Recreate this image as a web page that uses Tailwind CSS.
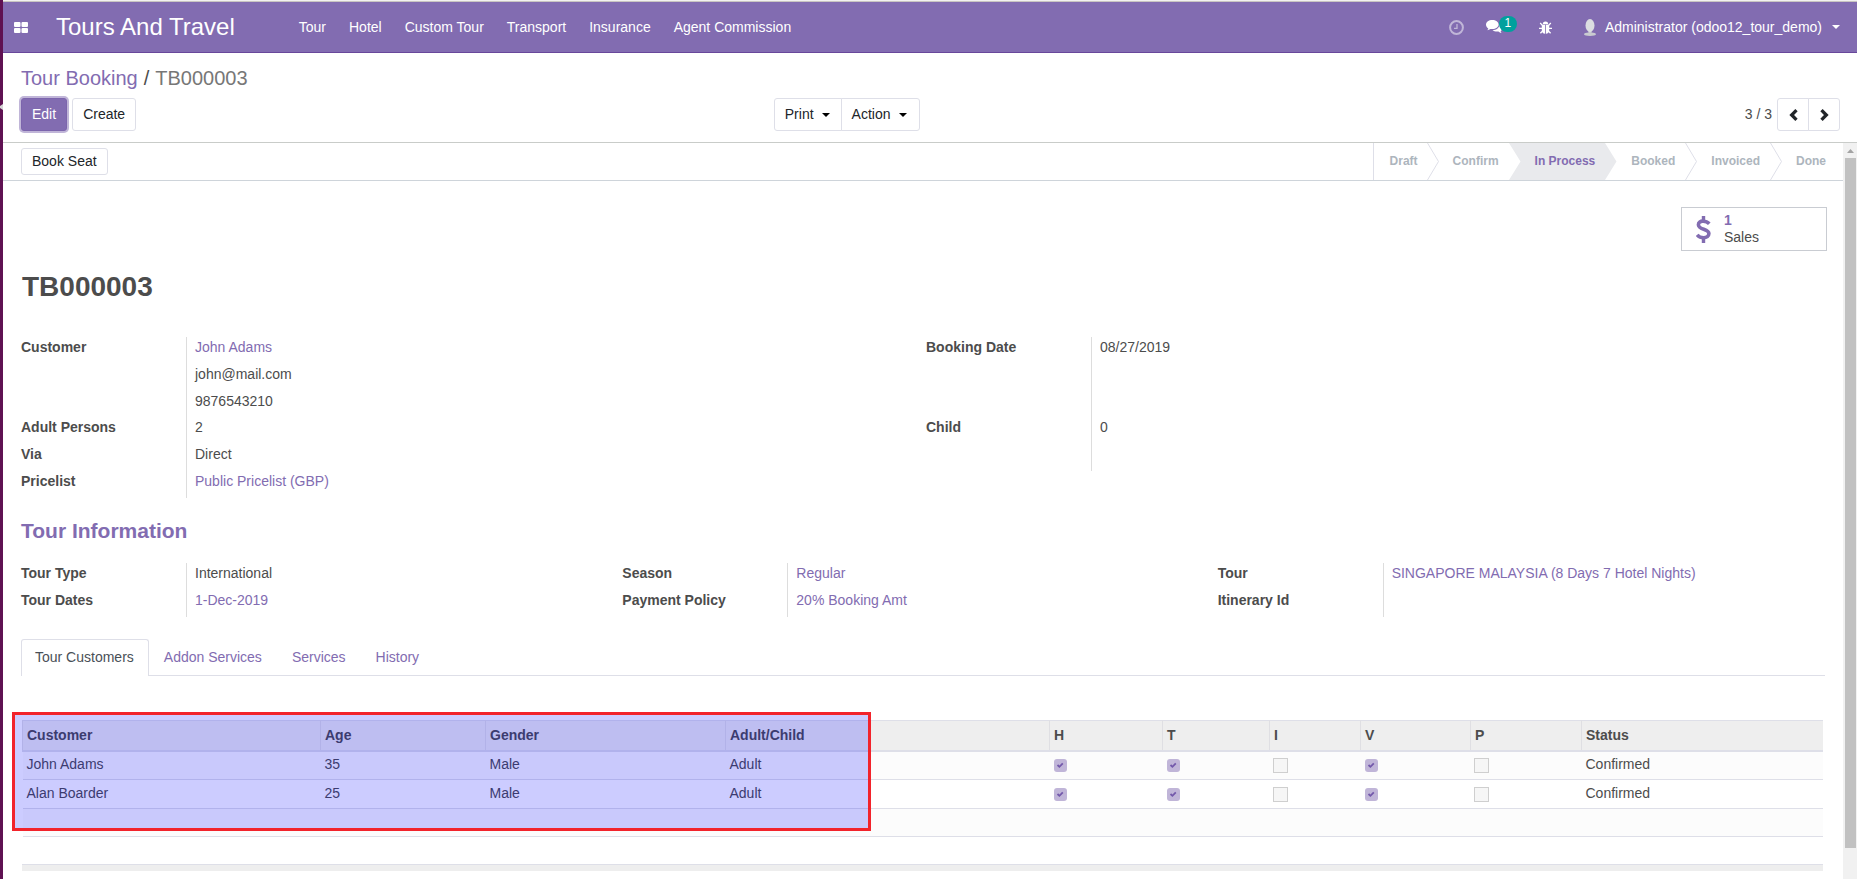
<!doctype html>
<html lang="en">
<head>
  <meta charset="UTF-8">
  <meta name="viewport" content="width=device-width, initial-scale=1.0">
  <title>TB000003 - Tours And Travel</title>
  <script src="https://cdn.jsdelivr.net/npm/@tailwindcss/browser@4"></script>
</head>
<body class="flex h-screen overflow-hidden bg-white font-['Liberation_Sans',Arial,sans-serif] text-sm leading-[21px] text-[#4c4c4c]">

<!-- launcher edge -->
<aside class="flex w-[3px] shrink-0 flex-col bg-[#5f1152] pt-[104px]">
  <svg class="h-[6px] w-[3px]" viewBox="0 0 3 6"><path fill="#d5d5d5" d="M3 0v6L0 4V2z"/></svg>
</aside>

<div class="flex min-w-0 flex-1 flex-col border-t border-[#f2f1f0]">

  <!-- navbar -->
  <header class="flex h-[52px] shrink-0 items-center border-t border-b border-t-[#c9c5c2] border-b-[#68479b] bg-[#826cb1] text-white">
    <button type="button" aria-label="Applications" class="ml-[11px]">
      <svg class="h-[11px] w-[14px]" viewBox="0 0 14 11" fill="#fff"><rect width="6.5" height="5" rx="1"/><rect x="7.5" width="6.5" height="5" rx="1"/><rect y="6" width="6.5" height="5" rx="1"/><rect x="7.5" y="6" width="6.5" height="5" rx="1"/></svg>
    </button>
    <a href="#" class="ml-7 text-2xl">Tours And Travel</a>
    <nav class="ml-16 flex gap-[23px]">
      <a href="#">Tour</a>
      <a href="#">Hotel</a>
      <a href="#">Custom Tour</a>
      <a href="#">Transport</a>
      <a href="#">Insurance</a>
      <a href="#">Agent Commission</a>
    </nav>
    <div class="ml-auto flex items-center pr-[17px]">
      <button type="button" aria-label="Activities" class="mr-[22px]">
        <svg class="size-[15px] opacity-50" viewBox="0 0 15 15" fill="none" stroke="#fff"><circle cx="7.5" cy="7.5" r="6.4" stroke-width="2"/><path d="M8 4v4.300H5" stroke-width="1.300"/></svg>
      </button>
      <button type="button" aria-label="Conversations" class="mr-[22px] flex items-center">
        <svg class="h-[14px] w-4" viewBox="0 0 16 14" fill="#fff"><path d="M6.300 0C2.800 0 0 2.100 0 4.700c0 1.500.9 2.800 2.300 3.700-.2.700-.6 1.200-1.200 1.800 1.300-.1 2.400-.6 3.300-1.300.6.100 1.200.2 1.900.2 3.500 0 6.300-2 6.300-4.500S9.800 0 6.300 0z"/><path d="M13.500 4.200c.2 3.300-3 5.800-7 6 1.100.9 2.800 1.400 4.500 1.400.5 0 1 0 1.400-.1.9.7 2 1.300 3.300 1.400-.5-.5-.9-1.100-1.100-1.700 1-.7 1.400-1.600 1.400-2.800 0-1.700-.9-3.200-2.500-4.200z"/></svg>
        <span class="-ml-[3px] -mt-[6px] h-4 w-[18px] rounded-full bg-[#00a09d] text-center text-xs leading-[14px]">1</span>
      </button>
      <button type="button" aria-label="Debug tools" class="mr-8">
        <svg class="size-[13px]" viewBox="0 0 13 13" fill="#fff"><path d="M3.800 3.200a2.700 2.700 0 0 1 5.400 0z"/><path d="M2.800 3.800h3.300v9C4 12.600 2.800 11.200 2.800 9zM6.900 3.800h3.300V9c0 2.200-1.200 3.600-3.300 3.800z"/><path d="M1.200 2 3.600 4.600M11.800 2 9.400 4.600M0 7.300h3.500M13 7.300H9.500M1.400 12.300l2.400-2.600M11.600 12.300 9.200 9.700" stroke="#fff" stroke-width="1.300"/></svg>
      </button>
      <button type="button" class="flex items-center">
        <svg class="mr-[9px] h-[17px] w-3" viewBox="0 0 12 17"><path fill="#c9cbd0" d="M4.500 12h3v1.500c2.500.2 4.500.8 4.500 1.800 0 1.100-2.700 1.700-6 1.700s-6-.6-6-1.700c0-1 2-1.600 4.500-1.800z"/><ellipse cx="6" cy="6.500" rx="4.500" ry="6.500" fill="#dcdee1"/></svg>
        Administrator (odoo12_tour_demo)
        <svg class="ml-[10px] h-1 w-2" viewBox="0 0 8 4"><path fill="#fff" d="M0 0h8L4 4z"/></svg>
      </button>
    </div>
  </header>

  <!-- breadcrumb, buttons and pager -->
  <section class="shrink-0 border-b border-[#c9ccc9] pb-[11px] pl-[18px] pr-[17px] pt-[10px]">
    <div class="flex gap-[6px] text-xl leading-[30px]">
      <a href="#" class="text-[#826cb1]">Tour Booking</a>
      <span>/</span>
      <span class="text-[#777]">TB000003</span>
    </div>
    <div class="mt-[5px] grid grid-cols-2 items-center">
      <div class="flex justify-between pr-[11px] text-[#212529]">
        <div class="flex gap-[5px]">
          <button type="button" class="h-[33px] rounded-[3px] border border-[#7c65ad] bg-[#826cb1] px-[10px] text-white ring-2 ring-[#826cb1]/50">Edit</button>
          <button type="button" class="h-[33px] rounded-[3px] border border-[#dedfe8] px-[10px]">Create</button>
        </div>
        <div class="flex">
          <button type="button" class="flex h-[33px] items-center gap-2 rounded-l-[3px] border border-[#dedfe8] pl-[10px] pr-[11px]">Print
            <svg class="h-1 w-2" viewBox="0 0 8 4"><path d="M0 0h8L4 4z"/></svg>
          </button>
          <button type="button" class="-ml-px flex h-[33px] items-center gap-2 rounded-r-[3px] border border-[#dedfe8] pl-[10px] pr-3">Action
            <svg class="h-1 w-2" viewBox="0 0 8 4"><path d="M0 0h8L4 4z"/></svg>
          </button>
        </div>
      </div>
      <div class="flex items-center justify-end">
        <span class="mr-[5px]">3 / 3</span>
        <button type="button" aria-label="Previous" class="flex h-[33px] w-8 items-center justify-center rounded-l-[3px] border border-[#dedfe8]">
          <svg class="h-3 w-[9px]" viewBox="0 0 9 12" fill="none" stroke="#212529" stroke-width="3.300"><path d="M7.500 1.200 2.700 6l4.800 4.800"/></svg>
        </button>
        <button type="button" aria-label="Next" class="-ml-px flex h-[33px] w-8 items-center justify-center rounded-r-[3px] border border-[#dedfe8]">
          <svg class="h-3 w-[9px]" viewBox="0 0 9 12" fill="none" stroke="#212529" stroke-width="3.300"><path d="M1.500 1.200 6.300 6l-4.800 4.800"/></svg>
        </button>
      </div>
    </div>
  </section>

  <div class="flex min-h-0 flex-1">
    <main class="min-w-0 flex-1 overflow-hidden">

      <!-- statusbar -->
      <div class="flex h-[38px] items-center justify-between border-b border-[#ced4da] pl-[18px]">
        <button type="button" class="h-[27px] rounded-[3px] border border-[#dedfe8] px-[10px] text-[#212529]">Book Seat</button>
        <ol class="flex h-full items-center border-l border-[#dedfe8] text-xs font-bold leading-[17px] text-[#adb5bd]">
          <li class="pl-4 pr-[9px]">Draft</li>
          <li><svg class="h-[37px] w-3" viewBox="0 0 12 37" fill="none" stroke="#dedfe8"><path d="M.5 0 11.500 18.500.5 37"/></svg></li>
          <li class="pl-[14px] pr-[10px]">Confirm</li>
          <li><svg class="h-[37px] w-3" viewBox="0 0 12 37"><path fill="#e9eaed" d="M0 0h12v37H0l11.500-18.500z"/></svg></li>
          <li class="flex h-full items-center bg-[#e9eaed] pl-[14px] pr-[10px] text-[#826cb1]">In Process</li>
          <li><svg class="h-[37px] w-3" viewBox="0 0 12 37"><path fill="#e9eaed" d="M0 0l11.500 18.500L0 37z"/></svg></li>
          <li class="pl-[14px] pr-[10px]">Booked</li>
          <li><svg class="h-[37px] w-3" viewBox="0 0 12 37" fill="none" stroke="#dedfe8"><path d="M.5 0 11.500 18.500.5 37"/></svg></li>
          <li class="pl-[14px] pr-[10px]">Invoiced</li>
          <li><svg class="h-[37px] w-3" viewBox="0 0 12 37" fill="none" stroke="#dedfe8"><path d="M.5 0 11.500 18.500.5 37"/></svg></li>
          <li class="pl-[14px] pr-[17px]">Done</li>
        </ol>
      </div>

      <div class="px-[18px] pt-[26px]">
        <div class="-mr-[2px] flex justify-end">
          <button type="button" class="flex h-11 w-[146px] items-center border border-[#c9ccd2] pl-[14px] text-left">
            <svg class="mr-[13px] h-[27px] w-[15px]" viewBox="0 0 15 27" fill="none" stroke="#826cb1"><path stroke-width="3.400" d="M7.500 0v5M7.500 22v5"/><path stroke-width="3.600" d="M13.300 7.800C11.600 6 9.700 5.200 7.300 5.200 4.600 4.800 2.400 6.400 2.400 8.700c0 5.300 10.500 3.800 10.500 8.900 0 2.500-2.200 4.100-5.300 4.100-2.700 0-4.900-1-6.500-2.900"/></svg>
            <span class="leading-[17px]"><b class="block text-[#826cb1]">1</b>Sales</span>
          </button>
        </div>

        <h1 class="mt-[15px] pl-px text-[28px] font-bold leading-[42px]">TB000003</h1>

        <div class="mt-[29px] grid grid-cols-2 items-start">
          <dl class="grid grid-cols-[166px_1fr]">
            <dt class="row-span-3 border-r border-[#dddddd] font-bold">Customer</dt>
            <dd class="h-[27px] pl-2"><a href="#" class="text-[#826cb1]">John Adams</a></dd>
            <dd class="h-[27px] pl-2">john@mail.com</dd>
            <dd class="h-[26px] pl-2">9876543210</dd>
            <dt class="h-[27px] border-r border-[#dddddd] font-bold">Adult Persons</dt>
            <dd class="pl-2">2</dd>
            <dt class="h-[27px] border-r border-[#dddddd] font-bold">Via</dt>
            <dd class="pl-2">Direct</dd>
            <dt class="h-[27px] border-r border-[#dddddd] font-bold">Pricelist</dt>
            <dd class="pl-2"><a href="#" class="text-[#826cb1]">Public Pricelist (GBP)</a></dd>
          </dl>
          <dl class="grid grid-cols-[166px_1fr] pl-[3px]">
            <dt class="h-20 border-r border-[#dddddd] font-bold">Booking Date</dt>
            <dd class="pl-2">08/27/2019</dd>
            <dt class="h-[54px] border-r border-[#dddddd] font-bold">Child</dt>
            <dd class="pl-2">0</dd>
          </dl>
        </div>

        <h2 class="mt-[17px] text-[21px] font-bold leading-8 text-[#826cb1]">Tour Information</h2>

        <div class="mt-4 flex">
          <dl class="grid w-1/3 grid-cols-[166px_1fr]">
            <dt class="h-[27px] border-r border-[#dddddd] font-bold">Tour Type</dt>
            <dd class="pl-2">International</dd>
            <dt class="h-[27px] border-r border-[#dddddd] font-bold">Tour Dates</dt>
            <dd class="pl-2"><a href="#" class="text-[#826cb1]">1-Dec-2019</a></dd>
          </dl>
          <dl class="grid w-[33%] grid-cols-[166px_1fr]">
            <dt class="h-[27px] border-r border-[#dddddd] font-bold">Season</dt>
            <dd class="pl-2"><a href="#" class="text-[#826cb1]">Regular</a></dd>
            <dt class="h-[27px] border-r border-[#dddddd] font-bold">Payment Policy</dt>
            <dd class="pl-2"><a href="#" class="text-[#826cb1]">20% Booking Amt</a></dd>
          </dl>
          <dl class="grid flex-1 grid-cols-[166px_1fr]">
            <dt class="h-[27px] border-r border-[#dddddd] font-bold">Tour</dt>
            <dd class="pl-2"><a href="#" class="text-[#826cb1]">SINGAPORE MALAYSIA (8 Days 7 Hotel Nights)</a></dd>
            <dt class="h-[27px] border-r border-[#dddddd] font-bold">Itinerary Id</dt>
            <dd class="pl-2"></dd>
          </dl>
        </div>

        <!-- notebook tabs -->
        <nav class="mt-[22px] flex border-b border-[#dedfe8]">
          <a href="#" class="-mb-px rounded-t-[3px] border border-b-0 border-[#dedfe8] bg-white pb-2 pl-[13px] pr-[14px] pt-[7px] text-[#495057]">Tour Customers</a>
          <a href="#" class="px-[15px] pb-[7px] pt-2 text-[#826cb1]">Addon Services</a>
          <a href="#" class="px-[15px] pb-[7px] pt-2 text-[#826cb1]">Services</a>
          <a href="#" class="px-[15px] pb-[7px] pt-2 text-[#826cb1]">History</a>
        </nav>

        <div class="relative mt-11 pl-px pr-[2px]">
          <table class="w-full table-fixed border-collapse text-left">
            <colgroup>
              <col class="w-[298px]"><col class="w-[165px]"><col class="w-[240px]"><col class="w-[324px]"><col class="w-[113px]"><col class="w-[107px]"><col class="w-[91px]"><col class="w-[110px]"><col class="w-[111px]"><col>
            </colgroup>
            <thead>
              <tr class="h-[30px] border-t border-b-2 border-[#dedfe8] bg-[#eeeeee]">
                <th class="border-l border-[#dfdfe3] pl-1">Customer</th>
                <th class="border-l border-[#dfdfe3] pl-1">Age</th>
                <th class="border-l border-[#dfdfe3] pl-1">Gender</th>
                <th class="border-l border-[#dfdfe3] pl-1">Adult/Child</th>
                <th class="border-l border-[#dfdfe3] pl-1">H</th>
                <th class="border-l border-[#dfdfe3] pl-1">T</th>
                <th class="border-l border-[#dfdfe3] pl-1">I</th>
                <th class="border-l border-[#dfdfe3] pl-1">V</th>
                <th class="border-l border-[#dfdfe3] pl-1">P</th>
                <th class="border-l border-[#dfdfe3] pl-1">Status</th>
              </tr>
            </thead>
            <tbody id="lines"></tbody>
          </table>
          <!-- highlighted columns -->
          <div class="pointer-events-none absolute -left-[9px] -top-2 h-[119px] w-[859px] border-[3px] border-[#f2232b] bg-[#0000ff]/20 bg-clip-padding"></div>
          <div class="mt-[27px] h-[7px] border-t border-[#dedfe8] bg-[#eeeeee]"></div>
        </div>
      </div>
    </main>

    <!-- scrollbar -->
    <div class="flex w-[14px] shrink-0 flex-col items-center bg-[#f1f1f1] pb-[31px]">
      <svg class="mb-[5px] mt-[6px] h-1 w-[7px] shrink-0" viewBox="0 0 7 4"><path fill="#a3a3a3" d="M0 4h7L3.500 0z"/></svg>
      <div class="w-[11px] flex-1 bg-[#c1c1c1]"></div>
    </div>
  </div>
</div>

<script>
  const lines = [
    { name: 'John Adams', age: 35, gender: 'Male', type: 'Adult', flags: { H: 1, T: 1, I: 0, V: 1, P: 0 }, status: 'Confirmed' },
    { name: 'Alan Boarder', age: 25, gender: 'Male', type: 'Adult', flags: { H: 1, T: 1, I: 0, V: 1, P: 0 }, status: 'Confirmed' },
  ];

  const checked = '<svg class="pointer-events-none absolute left-0 top-0 size-[13px]" viewBox="0 0 13 13"><path d="M3.500 6 5.400 7.800 8.800 4.300" fill="none" stroke="#7359ab" stroke-width="1.800"/></svg>';

  function box(on, label) {
    if (on) {
      return `<span class="relative ml-px block size-[13px]"><input type="checkbox" checked disabled aria-label="${label}" class="block size-[13px] appearance-none rounded-[3px] bg-[#c0b5d8]">${checked}</span>`;
    }
    return `<input type="checkbox" disabled aria-label="${label}" class="block size-[15px] appearance-none border border-[#cfcfcf] bg-[#f6f6f6]">`;
  }

  const rows = lines.map(l => `
    <tr class="h-[29px] border-b border-[#dedfe8] odd:bg-[#fcfcfc]">
      <td class="pb-[2px] pl-1">${l.name}</td>
      <td class="pb-[2px] pl-1">${l.age}</td>
      <td class="pb-[2px] pl-1">${l.gender}</td>
      <td class="pb-[2px] pl-1">${l.type}</td>
      ${Object.entries(l.flags).map(([k, on]) => `<td class="pl-[3px]">${box(on, k + ' ' + l.name)}</td>`).join('')}
      <td class="pb-[2px] pl-1">${l.status}</td>
    </tr>`);
  rows.push('<tr class="h-7 border-b border-[#dedfe8] bg-[#fcfcfc]"><td colspan="10"></td></tr>');
  document.getElementById('lines').innerHTML = rows.join('');
</script>

</body>
</html>
